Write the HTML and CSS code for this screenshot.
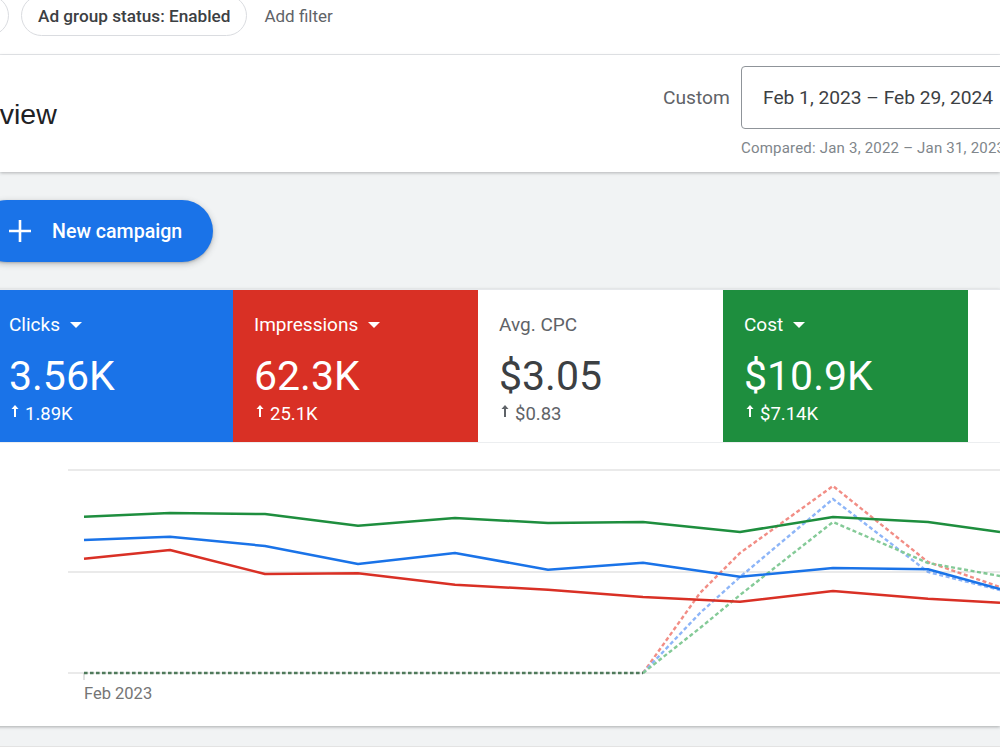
FILE: index.html
```html
<!DOCTYPE html>
<html lang="en">
  <head>
    <meta charset="UTF-8" />
    <meta name="viewport" content="width=device-width, initial-scale=1.0" />
    <title>Overview</title>
    <link rel="stylesheet" href="styles.css">
  </head>
  <body>
    <div class="filters">
      <span class="chip chip-cut">Campaign status: All</span>
      <span class="chip">Ad group status: Enabled</span>
      <span class="add-filter">Add filter</span>
    </div>

    <div class="header">
      <h1 class="title">Overview</h1>
      <div class="range">
        <div class="range-row">
          <span class="range-label">Custom</span>
          <div class="range-box">Feb 1, 2023 – Feb 29, 2024</div>
        </div>
        <div class="compared">Compared: Jan 3, 2022 – Jan 31, 2023</div>
      </div>
    </div>

    <div class="content">
      <button class="new-campaign">
        <svg width="24" height="24" viewBox="0 0 24 24">
          <path d="M12 1v22M1 12h22" stroke="#fff" stroke-width="2.6" fill="none" />
        </svg>
        New campaign
      </button>

      <div class="perf">
        <div class="metrics">
          <div class="metric blue">
            <div class="metric-label">Clicks <span class="caret"></span></div>
            <div class="metric-value">3.56K</div>
            <div class="metric-delta">
              <svg class="arrow" width="8" height="12" viewBox="0 0 8 12"><path d="M4 0L7.5 4H5V12H3V4H0.5Z" fill="currentColor" /></svg>1.89K
            </div>
          </div>
          <div class="metric red">
            <div class="metric-label">Impressions <span class="caret"></span></div>
            <div class="metric-value">62.3K</div>
            <div class="metric-delta">
              <svg class="arrow" width="8" height="12" viewBox="0 0 8 12"><path d="M4 0L7.5 4H5V12H3V4H0.5Z" fill="currentColor" /></svg>25.1K
            </div>
          </div>
          <div class="metric plain">
            <div class="metric-label">Avg. CPC</div>
            <div class="metric-value">$3.05</div>
            <div class="metric-delta">
              <svg class="arrow" width="8" height="12" viewBox="0 0 8 12"><path d="M4 0L7.5 4H5V12H3V4H0.5Z" fill="currentColor" /></svg>$0.83
            </div>
          </div>
          <div class="metric green">
            <div class="metric-label">Cost <span class="caret"></span></div>
            <div class="metric-value">$10.9K</div>
            <div class="metric-delta">
              <svg class="arrow" width="8" height="12" viewBox="0 0 8 12"><path d="M4 0L7.5 4H5V12H3V4H0.5Z" fill="currentColor" /></svg>$7.14K
            </div>
          </div>
          <div class="metric plain"></div>
        </div>

        <svg class="chart" width="1000" height="283" viewBox="0 0 1000 283">
          <!-- grid -->
          <g stroke="#e3e3e3" stroke-width="1.5">
            <line x1="68" y1="27" x2="1000" y2="27" />
            <line x1="68" y1="129" x2="1000" y2="129" />
            <line x1="68" y1="230" x2="1000" y2="230" />
          </g>
          <line x1="84" y1="230" x2="84" y2="237" stroke="#c4c4c4" stroke-width="1" />
          <text x="84" y="256" class="axis-label">Feb 2023</text>

          <!-- previous period (dotted) -->
          <g fill="none" stroke-width="2.4" stroke-dasharray="4 2.6" opacity="0.6">
            <polyline stroke="#ea4335" points="643,230 700,150 740,110 833,43 928,119 1000,144" />
            <polyline stroke="#4285f4" points="643,230 700,170 740,134 833,56 928,129 1000,147" />
            <polyline stroke="#34a853" points="643,230 700,185 740,152 833,79 928,120 1000,133" />
          </g>
          <polyline fill="none" stroke="#4f7a5b" stroke-width="2.6" stroke-dasharray="3.6 2.4"
            points="84,230 643,230" />

          <!-- current period -->
          <g fill="none" stroke-width="2.5" stroke-linejoin="round">
            <polyline stroke="#1e8e3e" points="84,73.7 170,70 265,71 358,82.7 455,75 548,80 643,79 740,89 833,74 928,79 1000,89" />
            <polyline stroke="#1a73e8" points="84,97 170,93.7 265,103 358,121 455,110 548,126.7 643,119.7 740,133.7 833,125 928,126.3 1000,146" />
            <polyline stroke="#d93025" points="84,115.7 170,107 265,131 358,130.3 455,141.7 548,146.7 643,154 740,158.7 833,148 928,155.7 1000,159.7" />
          </g>
        </svg>
      </div>

      <div class="next-card"></div>
    </div>
  </body>
</html>
```

FILE: styles.css
```css
html,
body {
  margin: 0;
  height: 100%;
}

body {
  width: 1000px;
  height: 750px;
  overflow: hidden;
  background: #f1f3f4;
  font-family: Roboto, "Liberation Sans", sans-serif;
  color: #3c4043;
}

.filters {
  height: 54px;
  background: #ffffff;
  border-bottom: 1px solid #e8eaed;
  display: flex;
  align-items: flex-start;
  gap: 12px;
  overflow: hidden;
}

.chip {
  box-sizing: border-box;
  height: 41px;
  margin-top: -5px;
  padding: 0 16px;
  display: flex;
  align-items: center;
  border: 1px solid #dadce0;
  border-radius: 21px;
  font-size: 17.2px;
  font-weight: 500;
  color: #3c4043;
  white-space: nowrap;
}

.chip-cut {
  width: 160px;
  margin-left: -151px;
  color: transparent;
}

.add-filter {
  margin-left: 5px;
  height: 32px;
  display: flex;
  align-items: center;
  font-size: 17px;
  color: #5f6368;
}

.header {
  height: 117px;
  background: #ffffff;
  display: flex;
  align-items: flex-start;
  padding-top: 11px;
  box-sizing: border-box;
  box-shadow: 0 1px 3px rgba(60, 64, 67, 0.35);
  position: relative;
  overflow: hidden;
}

.title {
  flex: 0 0 725px;
  margin: 31px 0 0 -62px;
  font-family: "Liberation Sans", Arial, sans-serif;
  font-size: 28.5px;
  font-weight: 400;
  line-height: 34px;
  color: #202124;
}

.range {
  flex: 0 0 auto;
  display: flex;
  flex-direction: column;
}

.range-row {
  display: flex;
  align-items: center;
}

.range-label {
  width: 78px;
  font-size: 19.2px;
  color: #5f6368;
}

.range-box {
  box-sizing: border-box;
  width: 300px;
  height: 63px;
  padding-left: 21px;
  display: flex;
  align-items: center;
  border: 1px solid #8f9499;
  border-radius: 4px;
  font-size: 19.2px;
  color: #3c4043;
  white-space: nowrap;
}

.compared {
  margin: 9px 0 0 78px;
  font-size: 15px;
  line-height: 20px;
  color: #80868b;
  white-space: nowrap;
  letter-spacing: 0.2px;
}

.content {
  padding-top: 28px;
}

.new-campaign {
  height: 62px;
  margin-left: -24px;
  padding: 0 31px 0 32px;
  display: flex;
  align-items: center;
  gap: 20px;
  border: none;
  border-radius: 31px;
  background: #1a73e8;
  color: #ffffff;
  font-family: Roboto, "Liberation Sans", sans-serif;
  font-size: 19.6px;
  font-weight: 500;
  box-shadow: 0 2px 6px rgba(60, 64, 67, 0.3), 0 1px 2px rgba(60, 64, 67, 0.2);
}

.perf {
  margin: 27px 0 0 -12px;
  width: 1012px;
  background: #ffffff;
  border-top: 1px solid #e6e8eb;
  box-shadow: 0 1px 3px rgba(60, 64, 67, 0.4);
}

.metrics {
  display: grid;
  grid-template-columns: repeat(5, 245px);
  height: 152px;
  border-bottom: 1px solid #eceef0;
}

.metric {
  box-sizing: border-box;
  padding: 23px 0 0 21px;
  color: #ffffff;
}

.metric.blue { background: #1a73e8; }
.metric.red { background: #d93025; }
.metric.green { background: #1e8e3e; }
.metric.plain { color: #3c4043; }

.metric-label {
  display: flex;
  align-items: center;
  font-size: 19px;
  line-height: 24px;
}

.metric.plain .metric-label { color: #5f6368; }

.caret {
  margin-left: 10px;
  width: 0;
  height: 0;
  border-left: 6px solid transparent;
  border-right: 6px solid transparent;
  border-top: 6px solid #ffffff;
}

.metric-value {
  margin-top: 15px;
  font-size: 41px;
  line-height: 48px;
}

.metric-delta {
  margin-top: 3px;
  font-size: 18.5px;
  line-height: 22px;
  display: flex;
  align-items: center;
}

.metric.plain .metric-delta { color: #5f6368; }

.arrow {
  margin: 0 6px 0 2px;
  position: relative;
  top: -3px;
}

.chart {
  display: block;
  margin-left: 12px;
}

.axis-label {
  font-family: Roboto, "Liberation Sans", sans-serif;
  font-size: 16.5px;
  fill: #757575;
}

.next-card {
  height: 40px;
  margin-top: 20px;
  background: #ffffff;
  border-top: 1px solid #e3e3e3;
}
```
